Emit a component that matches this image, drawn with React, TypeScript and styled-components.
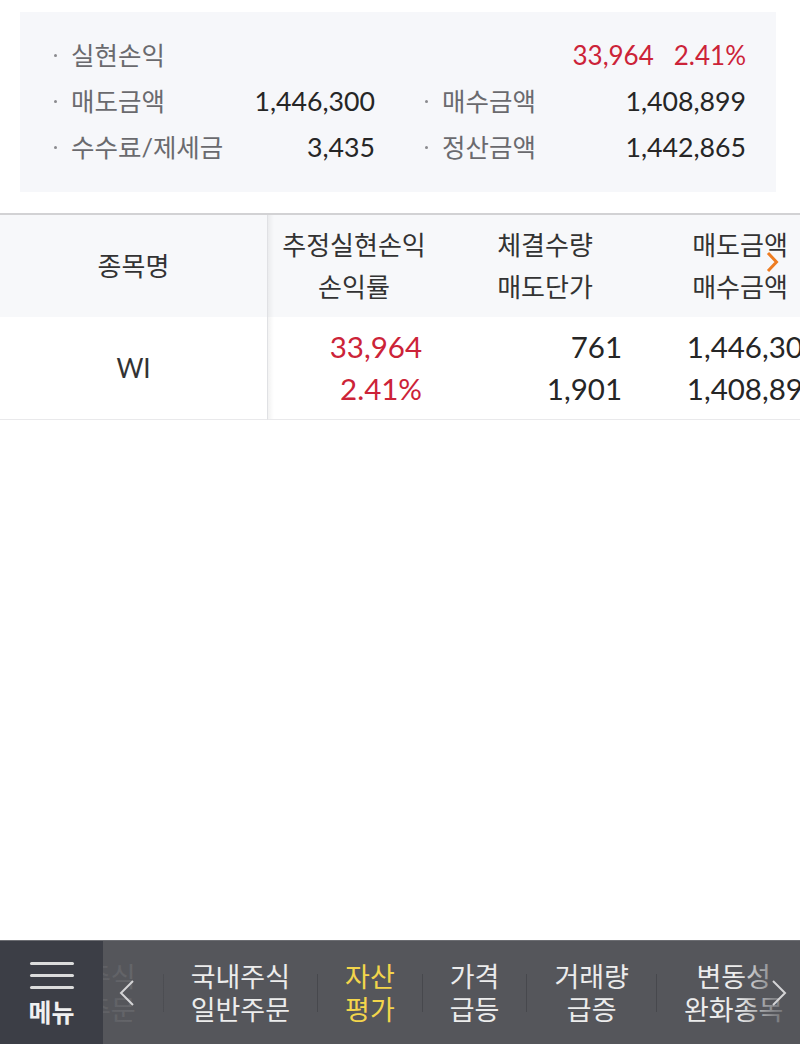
import React from "react";
import styled, { createGlobalStyle } from "styled-components";

const GlobalStyle = createGlobalStyle`
  html, body {
    margin: 0;
    padding: 0;
    background: #ffffff;
  }
  body {
    font-family: "Lato", "Noto Sans CJK KR", sans-serif;
  }
  * { box-sizing: border-box; }
`;

const Page = styled.div`
  width: 800px;
  height: 1044px;
  display: flex;
  flex-direction: column;
  overflow: hidden;
  background: #fff;
`;

const SummaryCard = styled.section`
  margin: 12px 24px 0 20px;
  height: 180px;
  background: #f6f7fa;
  padding: 20px 30px 0 32px;
  display: grid;
  grid-template-columns: 1fr 1fr;
  grid-auto-rows: 46px;
  column-gap: 48px;
`;

const Pair = styled.div`
  display: flex;
  align-items: center;
  justify-content: space-between;
  line-height: 46px;
`;

const Label = styled.span`
  display: flex;
  align-items: center;
  font-size: 25.5px;
  color: #6a6a6e;
`;

const Dot = styled.i`
  display: inline-block;
  width: 3px;
  height: 3px;
  border-radius: 50%;
  background: #8a8a8e;
  margin: 0 14px 0 2px;
`;

const Value = styled.span<{ $red?: boolean }>`
  margin-left: auto;
  font-size: ${(p) => (p.$red ? 26 : 26.7)}px;
  color: ${(p) => (p.$red ? "#cc2338" : "#262626")};
  display: flex;
  gap: 20px;
`;

const TableWrap = styled.div`
  position: relative;
  margin-top: 21px;
  border-top: 2px solid #d2d2d4;
  overflow: hidden;
`;

const Grid = styled.div`
  display: grid;
  grid-template-columns: 268px 172px 210px 180px;
  width: 830px;
`;

const shadowBg =
  "linear-gradient(to right, rgba(0,0,0,0.05), rgba(0,0,0,0) 6px)";

const HeadCell = styled.div<{ $first?: boolean; $shadow?: boolean }>`
  height: 102px;
  background: ${(p) => (p.$shadow ? `${shadowBg}, #f7f8fa` : "#f7f8fa")};
  border-right: ${(p) => (p.$first ? "1px solid #e0e1e4" : "none")};
  display: flex;
  flex-direction: column;
  align-items: center;
  justify-content: center;
  font-size: 26px;
  line-height: 42px;
  color: #333;
`;

const DataCell = styled.div<{ $first?: boolean; $shadow?: boolean; $pad?: number }>`
  height: 103px;
  background: ${(p) => (p.$shadow ? `${shadowBg}, #fff` : "#fff")};
  border-bottom: 1px solid #e9e9eb;
  border-right: ${(p) => (p.$first ? "1px solid #e0e1e4" : "none")};
  display: flex;
  flex-direction: column;
  justify-content: center;
  align-items: ${(p) => (p.$first ? "center" : "flex-end")};
  padding-right: ${(p) => (p.$first ? 0 : p.$pad ?? 0)}px;
  font-size: 29.5px;
  line-height: 42px;
  color: #262626;
`;

const Num = styled.span<{ $red?: boolean }>`
  color: ${(p) => (p.$red ? "#cc2338" : "#262626")};
`;

const Name = styled.span`
  font-size: 26px;
  color: #333;
`;

const ScrollHint = styled.svg`
  position: absolute;
  right: 21px;
  top: 36px;
`;

const Spacer = styled.div`
  flex: 1;
`;

const Nav = styled.nav`
  height: 104px;
  display: flex;
  background: #55565b;
  border-top: 1px solid #6c6d72;
`;

const MenuButton = styled.div`
  width: 103px;
  background: #3c3e46;
  display: flex;
  flex-direction: column;
  align-items: center;
  justify-content: center;
  gap: 9px;
  color: #f0f0f0;
  font-size: 25px;
  font-weight: 700;
  line-height: 28px;
  padding-top: 2px;
`;

const Burger = styled.div`
  width: 44px;
  display: flex;
  flex-direction: column;
  gap: 9px;
  & > span {
    height: 3px;
    border-radius: 2px;
    background: #dcdcdc;
  }
`;

const TabArea = styled.div`
  position: relative;
  flex: 1;
  overflow: hidden;
  display: flex;
  align-items: center;
`;

const TabStrip = styled.div`
  display: flex;
  align-items: center;
  margin-left: -44px;
  flex-shrink: 0;
`;

const Tab = styled.div<{ $active?: boolean }>`
  padding: 0 27px;
  display: flex;
  flex-direction: column;
  align-items: center;
  font-size: 27px;
  line-height: 33px;
  white-space: nowrap;
  color: ${(p) => (p.$active ? "#f3d54b" : "#ececec")};
`;

const Divider = styled.span`
  width: 1px;
  height: 38px;
  background: #47484d;
`;

const FadeLeft = styled.div`
  position: absolute;
  left: 0;
  top: 0;
  bottom: 0;
  width: 72px;
  background: linear-gradient(
    to right,
    rgba(85, 86, 91, 0.93) 0,
    rgba(85, 86, 91, 0.88) 45px,
    rgba(85, 86, 91, 0) 72px
  );
  display: flex;
  align-items: center;
  padding-left: 16px;
`;

const FadeRight = styled.div`
  position: absolute;
  right: 0;
  top: 0;
  bottom: 0;
  width: 62px;
  background: linear-gradient(
    to left,
    rgba(85, 86, 91, 0.85) 0,
    rgba(85, 86, 91, 0.7) 25px,
    rgba(85, 86, 91, 0) 62px
  );
  display: flex;
  align-items: center;
  justify-content: flex-end;
  padding-right: 13px;
`;

const Chevron = ({ dir }: { dir: "left" | "right" }) => (
  <svg width="16" height="28" viewBox="0 0 16 28">
    <polyline
      points={dir === "left" ? "14,2 2,14 14,26" : "2,2 14,14 2,26"}
      fill="none"
      stroke="#d4d4d6"
      strokeWidth="2"
    />
  </svg>
);

type Cell = { label?: string; value?: string };

const rows: Cell[][] = [
  [{ label: "실현손익" }, {}],
  [
    { label: "매도금액", value: "1,446,300" },
    { label: "매수금액", value: "1,408,899" },
  ],
  [
    { label: "수수료/제세금", value: "3,435" },
    { label: "정산금액", value: "1,442,865" },
  ],
];

const tabs = [
  { top: "주식", bottom: "주문" },
  { top: "국내주식", bottom: "일반주문" },
  { top: "자산", bottom: "평가", active: true },
  { top: "가격", bottom: "급등" },
  { top: "거래량", bottom: "급증" },
  { top: "변동성", bottom: "완화종목" },
];

export default function App() {
  return (
    <Page>
      <GlobalStyle />
      <SummaryCard>
        {rows.flatMap((r, i) =>
          r.map((c, j) => (
            <Pair key={`${i}-${j}`}>
              {c.label && (
                <Label>
                  <Dot />
                  {c.label}
                </Label>
              )}
              {i === 0 && j === 1 ? (
                <Value $red>
                  <span>33,964</span>
                  <span>2.41%</span>
                </Value>
              ) : (
                c.value && <Value>{c.value}</Value>
              )}
            </Pair>
          ))
        )}
      </SummaryCard>

      <TableWrap>
        <Grid>
          <HeadCell $first>종목명</HeadCell>
          <HeadCell $shadow>
            <span>추정실현손익</span>
            <span>손익률</span>
          </HeadCell>
          <HeadCell>
            <span>체결수량</span>
            <span>매도단가</span>
          </HeadCell>
          <HeadCell>
            <span>매도금액</span>
            <span>매수금액</span>
          </HeadCell>

          <DataCell $first>
            <Name>WI</Name>
          </DataCell>
          <DataCell $shadow $pad={18}>
            <Num $red>33,964</Num>
            <Num $red>2.41%</Num>
          </DataCell>
          <DataCell $pad={28}>
            <Num>761</Num>
            <Num>1,901</Num>
          </DataCell>
          <DataCell $pad={10}>
            <Num>1,446,300</Num>
            <Num>1,408,899</Num>
          </DataCell>
        </Grid>
        <ScrollHint width="13" height="22" viewBox="0 0 13 22">
          <polyline
            points="2,2 10.5,11 2,20"
            fill="none"
            stroke="#ee7d22"
            strokeWidth="3"
          />
        </ScrollHint>
      </TableWrap>

      <Spacer />

      <Nav>
        <MenuButton>
          <Burger>
            <span />
            <span />
            <span />
          </Burger>
          메뉴
        </MenuButton>
        <TabArea>
          <TabStrip>
            {tabs.map((t, i) => (
              <React.Fragment key={t.top + t.bottom}>
                {i > 0 && <Divider />}
                <Tab $active={t.active}>
                  <span>{t.top}</span>
                  <span>{t.bottom}</span>
                </Tab>
              </React.Fragment>
            ))}
          </TabStrip>
          <FadeLeft>
            <Chevron dir="left" />
          </FadeLeft>
          <FadeRight>
            <Chevron dir="right" />
          </FadeRight>
        </TabArea>
      </Nav>
    </Page>
  );
}
